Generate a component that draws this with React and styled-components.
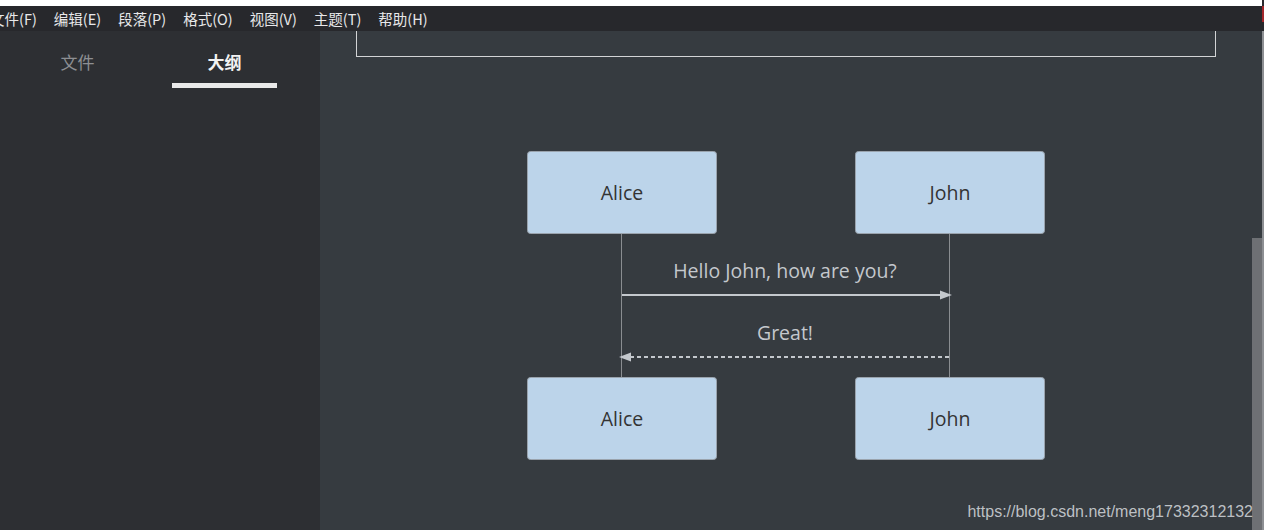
import React from "react";
import styled, { createGlobalStyle } from "styled-components";

const Global = createGlobalStyle`
  html, body { margin: 0; padding: 0; background: #ffffff; }
  body { width: 1264px; height: 530px; overflow: hidden; }
`;

const Frame = styled.div`
  position: relative;
  width: 1264px;
  height: 530px;
  display: flex;
  overflow: hidden;
  font-family: "Noto Sans CJK SC", "Noto Sans", sans-serif;
`;

const Window = styled.div`
  width: 1262px;
  display: flex;
  flex-direction: column;
`;

const EdgeStrip = styled.div`
  width: 2px;
  display: flex;
  flex-direction: column;
  background: #8d8f93;
`;

const EdgePart = styled.div`
  height: ${(p) => p.h}px;
  background: ${(p) => p.c};
`;

const TopStrip = styled.div`
  height: 6px;
  background: #ffffff;
`;

const MenuBar = styled.div`
  height: 25px;
  background: #27282c;
  display: flex;
  align-items: center;
  gap: 17px;
  overflow: hidden;
`;

const MenuItem = styled.span`
  color: #e8e8ea;
  font-size: 14.5px;
  line-height: 25px;
  white-space: nowrap;
  &:first-child {
    margin-left: -10px;
  }
`;

const Body = styled.div`
  flex: 1;
  display: flex;
  min-height: 0;
`;

const Sidebar = styled.div`
  width: 320px;
  background: #2d2f33;
  display: flex;
  flex-direction: column;
`;

const Tabs = styled.div`
  display: flex;
  gap: 42px;
  padding: 14px 0 0 25px;
`;

const Tab = styled.div`
  width: 105px;
  height: 43px;
  box-sizing: border-box;
  text-align: center;
  font-size: 17px;
  line-height: 34px;
  color: ${(p) => (p.active ? "#f2f2f2" : "#8d8f93")};
  font-weight: ${(p) => (p.active ? 700 : 400)};
  border-bottom: 5px solid ${(p) => (p.active ? "#e9e9e9" : "transparent")};
`;

const Main = styled.div`
  flex: 1;
  background: #363b40;
  display: flex;
  flex-direction: column;
  align-items: center;
  min-width: 0;
`;

const CutBox = styled.div`
  width: 860px;
  height: 26px;
  box-sizing: border-box;
  border: 1px solid #d2d4d6;
  border-top: none;
`;

const Diagram = styled.svg`
  margin-top: 93px;
  display: block;
`;

const ScrollTrack = styled.div`
  width: 10px;
  background: #363b40;
  display: flex;
  flex-direction: column;
`;

const ScrollThumb = styled.div`
  margin-top: 207px;
  flex: 1;
  background: #6e7074;
`;

const Watermark = styled.div`
  position: absolute;
  right: 11px;
  top: 502px;
  font-family: "Liberation Sans", Arial, sans-serif;
  font-size: 16px;
  line-height: 20px;
  color: rgba(215, 218, 222, 0.85);
  white-space: nowrap;
`;

const menus = ["文件(F)", "编辑(E)", "段落(P)", "格式(O)", "视图(V)", "主题(T)", "帮助(H)"];

const boxFill = "#bcd4ea";
const boxStroke = "#9aa3ad";
const lineColor = "#c4c8cd";
const fontStack = "'Trebuchet MS', 'Open Sans', 'DejaVu Sans', sans-serif";

function Actor({ x, y, label }) {
  return (
    <g>
      <rect x={x} y={y} width={189} height={82} rx={3} fill={boxFill} stroke={boxStroke} strokeWidth={1} />
      <text
        x={x + 94.5}
        y={y + 41}
        textAnchor="middle"
        dominantBaseline="central"
        fill="#333"
        fontSize={19.5}
        fontFamily={fontStack}
      >
        {label}
      </text>
    </g>
  );
}

export default function App() {
  return (
    <>
      <Global />
      <Frame>
        <Window>
          <TopStrip />
          <MenuBar>
            {menus.map((m) => (
              <MenuItem key={m}>{m}</MenuItem>
            ))}
          </MenuBar>
          <Body>
            <Sidebar>
              <Tabs>
                <Tab>文件</Tab>
                <Tab active>大纲</Tab>
              </Tabs>
            </Sidebar>
            <Main>
              <CutBox />
              <Diagram width="520" height="312" viewBox="0 0 520 312">
                <line x1="95.5" y1="83" x2="95.5" y2="227" stroke="#8a8d91" strokeWidth="1" />
                <line x1="423.5" y1="83" x2="423.5" y2="227" stroke="#8a8d91" strokeWidth="1" />
                <Actor x={1.5} y={1.5} label="Alice" />
                <Actor x={329.5} y={1.5} label="John" />
                <Actor x={1.5} y={227.5} label="Alice" />
                <Actor x={329.5} y={227.5} label="John" />
                <text
                  x="259"
                  y="120"
                  textAnchor="middle"
                  dominantBaseline="central"
                  fill={lineColor}
                  fontSize="19.5"
                  fontFamily={fontStack}
                >
                  Hello John, how are you?
                </text>
                <line x1="96" y1="145" x2="416" y2="145" stroke={lineColor} strokeWidth="2" />
                <polygon points="414,140.5 426,145 414,149.5" fill={lineColor} />
                <text
                  x="259"
                  y="182"
                  textAnchor="middle"
                  dominantBaseline="central"
                  fill={lineColor}
                  fontSize="19.5"
                  fontFamily={fontStack}
                >
                  Great!
                </text>
                <line
                  x1="423"
                  y1="207"
                  x2="102"
                  y2="207"
                  stroke={lineColor}
                  strokeWidth="2"
                  strokeDasharray="4 3"
                />
                <polygon points="105,202.5 93,207 105,211.5" fill={lineColor} />
              </Diagram>
            </Main>
            <ScrollTrack>
              <ScrollThumb />
            </ScrollTrack>
          </Body>
        </Window>
        <EdgeStrip>
          <EdgePart h={6} c="#2a2b2f" />
          <EdgePart h={16} c="#a3262b" />
          <EdgePart h={9} c="#27282c" />
        </EdgeStrip>
        <Watermark>https://blog.csdn.net/meng17332312132</Watermark>
      </Frame>
    </>
  );
}
